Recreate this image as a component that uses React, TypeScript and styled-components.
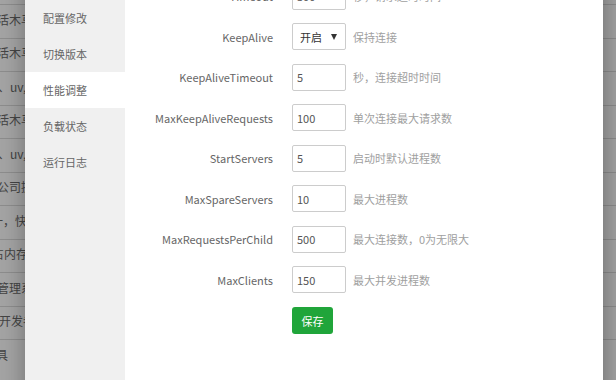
import React from "react";
import styled, { createGlobalStyle } from "styled-components";

const GlobalStyle = createGlobalStyle`
  html, body {
    margin: 0;
    padding: 0;
    width: 616px;
    height: 380px;
    overflow: hidden;
    background: #fff;
    font-family: "Noto Sans CJK SC", "Open Sans", sans-serif;
    font-size: 11px;
  }
  * { box-sizing: border-box; }
`;

const Viewport = styled.div`
  position: relative;
  width: 616px;
  height: 380px;
  overflow: hidden;
  background: #fff;
`;

const PageTable = styled.div`
  padding-top: 4px;
  display: flex;
  flex-direction: column;
`;

const PageRow = styled.div`
  height: 33.5px;
  border-top: 1px solid #dcdcdc;
  display: flex;
  align-items: center;
  padding-bottom: 4px;
  color: #6a6a6a;
  font-size: 12px;
  white-space: nowrap;
`;

const PageCell = styled.span<{ $shift: number }>`
  margin-left: ${(p) => p.$shift}px;
`;

const Shade = styled.div`
  position: absolute;
  inset: 0;
  background: rgba(0, 0, 0, 0.355);
`;

const Dialog = styled.div`
  position: absolute;
  left: 25px;
  top: -36px;
  width: 578px;
  height: 460px;
  background: #fff;
  display: flex;
  box-shadow: 1px 1px 24px rgba(0, 0, 0, 0.35);
`;

const Menu = styled.div`
  width: 100px;
  background: #f0f0f0;
  display: flex;
  flex-direction: column;
`;

const MenuItem = styled.div<{ $active?: boolean }>`
  height: 36px;
  line-height: 36px;
  padding-left: 18px;
  color: #666;
  font-size: 11px;
  background: ${(p) => (p.$active ? "#fff" : "transparent")};
`;

const Content = styled.div`
  flex: 1;
  padding-top: 18.5px;
  display: flex;
  flex-direction: column;
`;

const Row = styled.div`
  display: flex;
  align-items: center;
  height: 27px;
  margin-bottom: 13.5px;
`;

const Label = styled.div`
  width: 148px;
  margin-right: 19px;
  text-align: right;
  color: #666;
  font-size: 11px;
  white-space: nowrap;
`;

const Input = styled.input`
  width: 54px;
  height: 27px;
  border: 1px solid #ccc;
  border-radius: 2px;
  padding: 0 4px;
  font-family: inherit;
  font-size: 11px;
  color: #555;
  outline: none;
  background: #fff;
`;

const SelectWrap = styled.div`
  position: relative;
  width: 54px;
  height: 27px;
`;

const Select = styled.select`
  appearance: none;
  -webkit-appearance: none;
  width: 100%;
  height: 100%;
  border: 1px solid #ccc;
  border-radius: 2px;
  padding: 0 0 0 7px;
  font-family: inherit;
  font-size: 11px;
  color: #333;
  background: #fff;
  outline: none;
`;

const Arrow = styled.span`
  position: absolute;
  right: 9px;
  top: 11px;
  width: 0;
  height: 0;
  border-left: 3px solid transparent;
  border-right: 3px solid transparent;
  border-top: 6px solid #333;
  pointer-events: none;
`;

const Desc = styled.span`
  margin-left: 7px;
  color: #a0a0a0;
  font-size: 11px;
  white-space: nowrap;
`;

const SaveButton = styled.button`
  margin-left: 167px;
  margin-top: 0.5px;
  width: 41px;
  height: 27px;
  border: none;
  border-radius: 3px;
  background: #20a53a;
  color: #fff;
  font-family: inherit;
  font-size: 11px;
  padding: 0;
  cursor: pointer;
`;

const pageRows: { text: string; shift: number }[] = [
  { text: "活木马", shift: -3 },
  { text: "活木马", shift: -3 },
  { text: "、uv,", shift: -2 },
  { text: "活木马", shift: -3 },
  { text: "、uv,", shift: -2 },
  { text: "公司提", shift: -3 },
  { text: "一，快", shift: -9 },
  { text: "占内存", shift: -8 },
  { text: "管理系", shift: -3 },
  { text: "开发者", shift: -1 },
  { text: "具", shift: -4 },
];

const menu = ["服务", "配置修改", "切换版本", "性能调整", "负载状态", "运行日志"];

const fields: { name: string; value: string; desc: string }[] = [
  { name: "KeepAliveTimeout", value: "5", desc: "秒，连接超时时间" },
  { name: "MaxKeepAliveRequests", value: "100", desc: "单次连接最大请求数" },
  { name: "StartServers", value: "5", desc: "启动时默认进程数" },
  { name: "MaxSpareServers", value: "10", desc: "最大进程数" },
  { name: "MaxRequestsPerChild", value: "500", desc: "最大连接数，0为无限大" },
  { name: "MaxClients", value: "150", desc: "最大并发进程数" },
];

export default function App() {
  return (
    <Viewport>
      <GlobalStyle />
      <PageTable>
        {pageRows.map((r, i) => (
          <PageRow key={i}>
            <PageCell $shift={r.shift}>{r.text}</PageCell>
          </PageRow>
        ))}
      </PageTable>
      <Shade />
      <Dialog>
        <Menu>
          {menu.map((m) => (
            <MenuItem key={m} $active={m === "性能调整"}>
              {m}
            </MenuItem>
          ))}
        </Menu>
        <Content>
          <Row>
            <Label>Timeout</Label>
            <Input defaultValue="300" />
            <Desc>秒，请求超时时间</Desc>
          </Row>
          <Row>
            <Label>KeepAlive</Label>
            <SelectWrap>
              <Select defaultValue="on">
                <option value="on">开启</option>
                <option value="off">关闭</option>
              </Select>
              <Arrow />
            </SelectWrap>
            <Desc>保持连接</Desc>
          </Row>
          {fields.map((f) => (
            <Row key={f.name}>
              <Label>{f.name}</Label>
              <Input defaultValue={f.value} />
              <Desc>{f.desc}</Desc>
            </Row>
          ))}
          <SaveButton>保存</SaveButton>
        </Content>
      </Dialog>
    </Viewport>
  );
}
